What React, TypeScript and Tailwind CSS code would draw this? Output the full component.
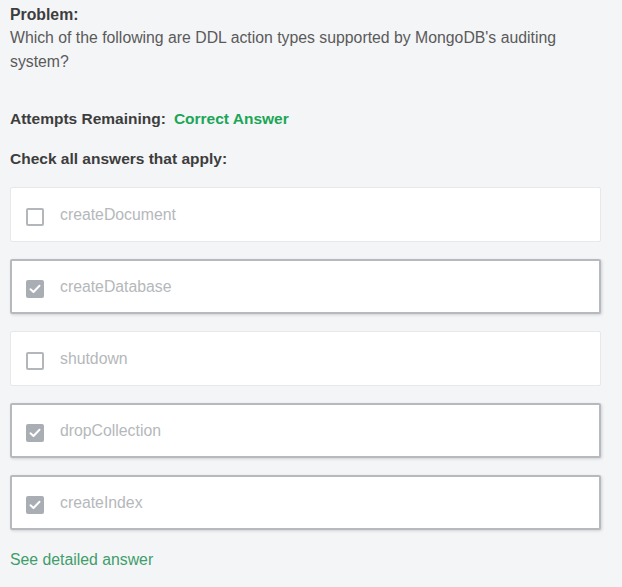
import React from "react";

const options = [
  { label: "createDocument", checked: false },
  { label: "createDatabase", checked: true },
  { label: "shutdown", checked: false },
  { label: "dropCollection", checked: true },
  { label: "createIndex", checked: true },
];

function Box({ checked }: { checked: boolean }) {
  if (checked) {
    return (
      <span className="flex h-[18px] w-[18px] shrink-0 items-center justify-center rounded-[2px] bg-[#a8aeb4]">
        <svg width="12" height="10" viewBox="0 0 12 10" fill="none">
          <path d="M1.5 5.2 L4.5 8 L10.5 1.8" stroke="white" strokeWidth="2" strokeLinecap="round" strokeLinejoin="round" />
        </svg>
      </span>
    );
  }
  return <span className="block h-[18px] w-[18px] shrink-0 rounded-[2px] border-2 border-[#b3b7bb] bg-white" />;
}

export default function App() {
  return (
    <div
      className="min-h-[587px] w-[622px] bg-[#f4f5f7] px-[10px] pt-[4px] text-[15.8px] text-[#4a4a4a]"
      style={{ fontFamily: '"Liberation Sans", Arial, sans-serif' }}
    >
      <div className="font-bold leading-[22px] text-[#3d3d3d]">Problem:</div>
      <p className="leading-[24px] text-[#5a5a5a] pr-[40px]">
        Which of the following are DDL action types supported by MongoDB's auditing system?
      </p>
      <div className="mt-[34px] flex gap-[8px] leading-[22px] font-bold text-[15.5px]">
        <span className="text-[#3d3d3d]">Attempts Remaining:</span>
        <span className="text-[#1aa656]">Correct Answer</span>
      </div>
      <div className="mt-[18px] font-bold leading-[22px] text-[15.5px] text-[#3d3d3d]">Check all answers that apply:</div>
      <div className="mt-[17px] flex w-[591px] flex-col gap-[17px]">
        {options.map((o) => (
          <div
            key={o.label}
            className={
              o.checked
                ? "flex h-[55px] items-center gap-[16px] rounded-[2px] border-2 border-[#b6babe] bg-white pl-[14px] shadow-[1px_1px_3px_rgba(0,0,0,0.15)]"
                : "flex h-[55px] items-center gap-[16px] rounded-[2px] border border-[#e6e8ea] bg-white pl-[15px]"
            }
          >
            <span className="mt-[4px] block">
              <Box checked={o.checked} />
            </span>
            <span className="text-[15.8px] text-[#b5b8bb]">{o.label}</span>
          </div>
        ))}
      </div>
      <div className="mt-[19px] leading-[22px] text-[#3f9d6b]">See detailed answer</div>
    </div>
  );
}
